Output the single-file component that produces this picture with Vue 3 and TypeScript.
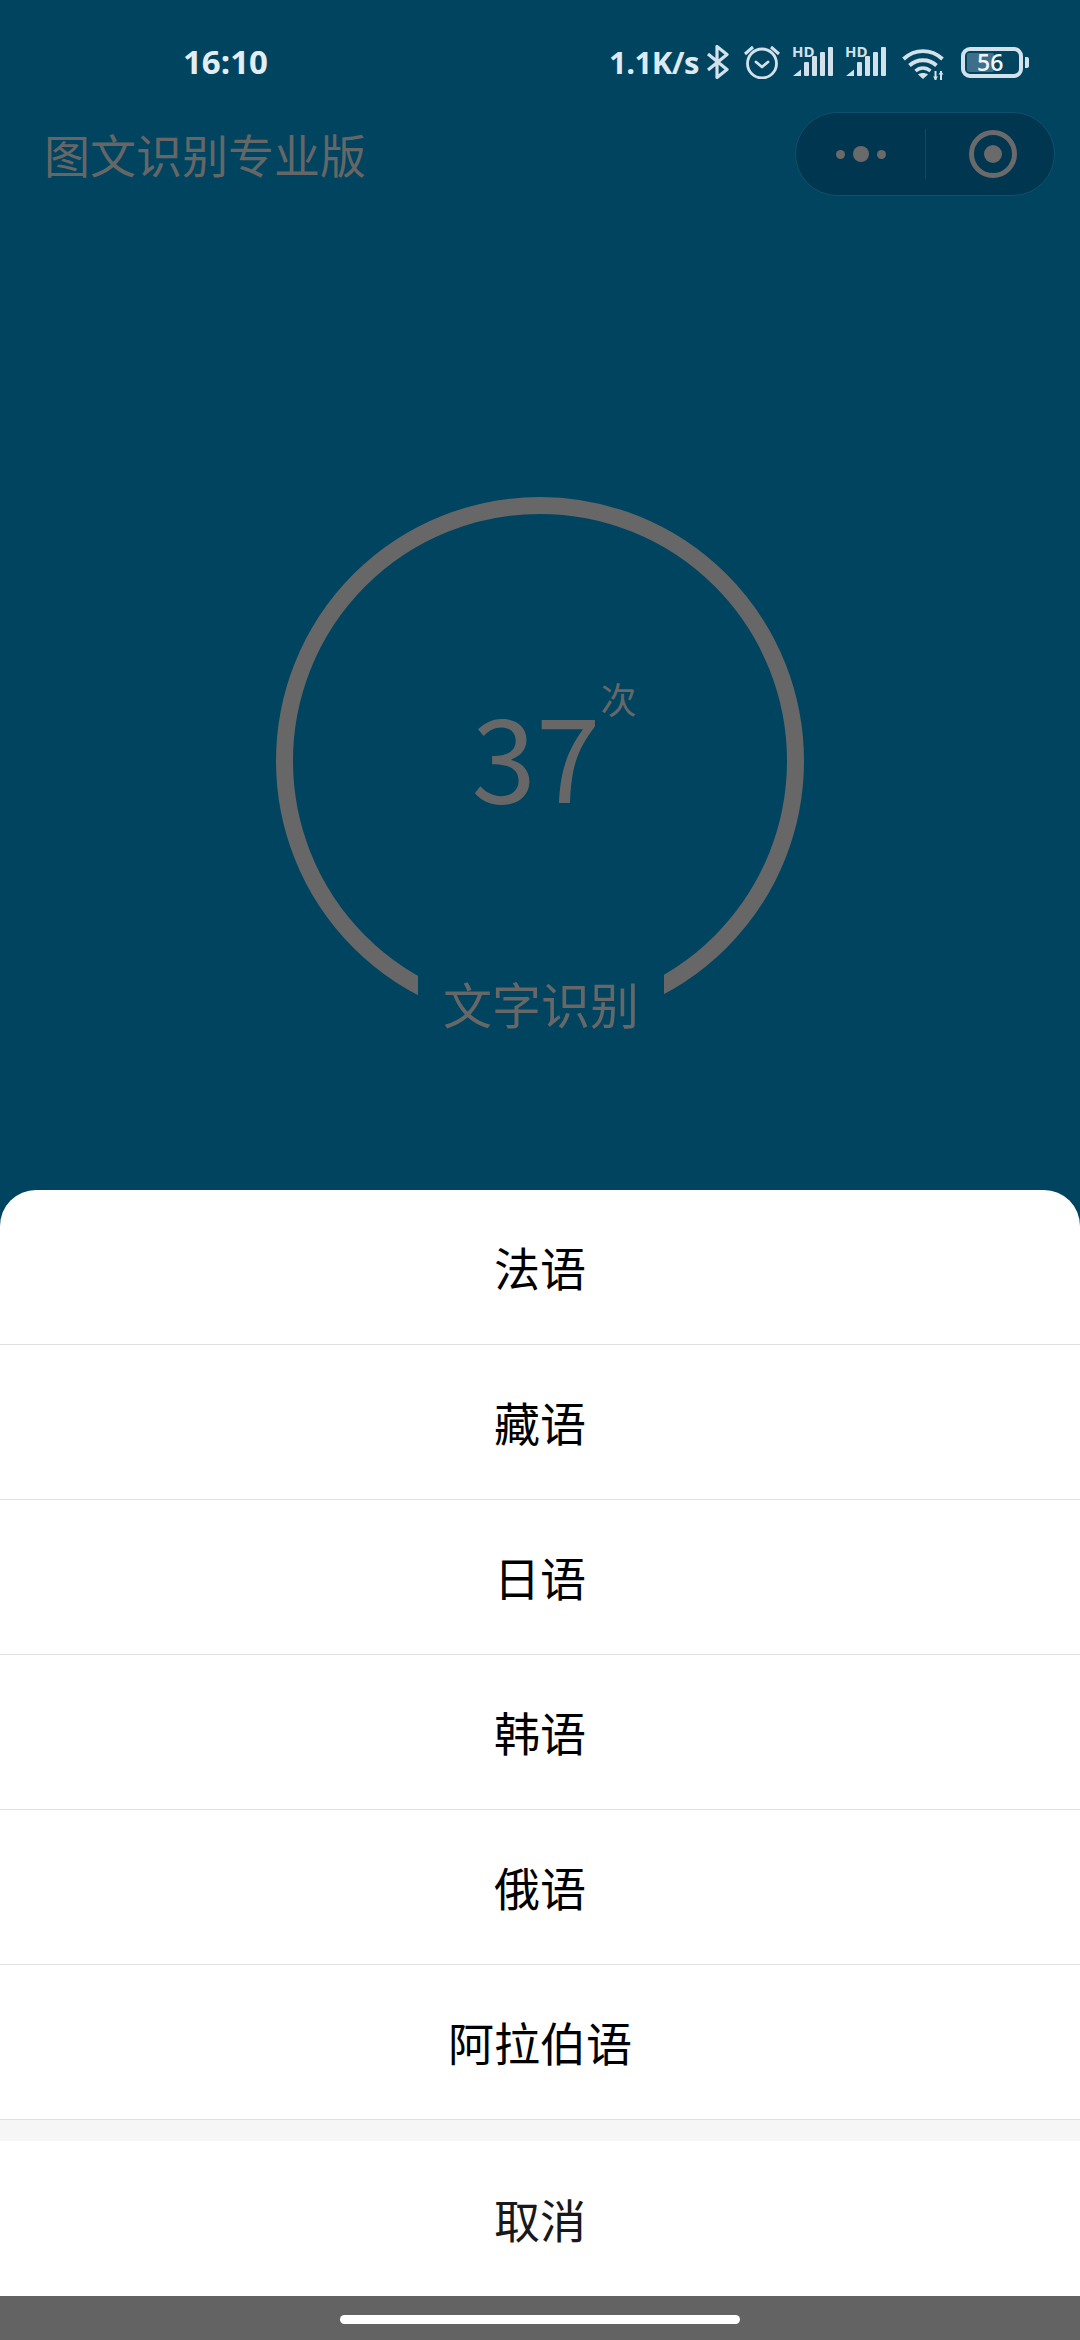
<script setup lang="ts">
const languages: string[] = ["法语", "藏语", "日语", "韩语", "俄语", "阿拉伯语"];
const signalCards: number[] = [1, 2];
</script>

<template>
  <div class="page">
    <div class="status-bar">
      <span class="time">16:10</span>
      <div class="status-right">
        <span class="speed">1.1K/s</span>
        <svg class="ic-bt" width="22" height="34" viewBox="0 0 22 34" fill="none" stroke="#d3e2ea" stroke-width="3.200">
          <path d="M1 9 20 24.500 10 32.500V1.500L20 9.500 1 25" stroke-linejoin="round" />
        </svg>
        <svg class="ic-alarm" width="36" height="34" viewBox="0 0 36 34" fill="none" stroke="#d3e2ea" stroke-width="2.800">
          <circle cx="18" cy="18.500" r="14.500" />
          <path d="M12 17 18 22l6-5" stroke-linecap="round" stroke-linejoin="round" />
          <path d="M1 9 9 2M35 9 27 2" stroke-width="3" />
        </svg>
        <div v-for="card in signalCards" :key="card" class="signal">
          <span class="hd">HD</span>
          <svg width="40" height="29" viewBox="0 0 40 29" fill="#d3e2ea">
            <path d="M0 29 8 22.500V29Z" />
            <rect x="11" y="15" width="5" height="14" rx="1" />
            <rect x="19" y="9" width="5" height="20" rx="1" />
            <rect x="27" y="5" width="5" height="24" rx="1" />
            <rect x="35" y="0" width="5" height="29" rx="1" />
          </svg>
        </div>
        <svg class="ic-wifi" width="44" height="34" viewBox="0 0 44 34" fill="none" stroke="#d3e2ea" stroke-width="3.800">
          <path d="M1.500 12C13 1.500 29 1.500 40.500 12" />
          <path d="M7.500 18.500C15 11.500 27 11.500 34.500 18.500" />
          <path d="M13.500 24C18 20 24 20 28.500 24" stroke-width="3.400" />
          <path d="M16 27.500C18.500 25.500 23.500 25.500 26 27.500L21 32Z" fill="#d3e2ea" stroke="none" />
          <path d="M33.500 24v9M39 24v9" stroke-width="2" />
          <path d="M31 29.500h5L33.500 33ZM36.500 27.500h5L39 24Z" fill="#d3e2ea" stroke="none" />
        </svg>
        <div class="battery">
          <div class="battery-body">
            <div class="battery-fill"></div>
            <span class="battery-num">56</span>
          </div>
          <div class="battery-nub"></div>
        </div>
      </div>
    </div>

    <div class="nav-bar">
      <span class="nav-title">图文识别专业版</span>
      <div class="capsule">
        <div class="capsule-left">
          <i class="dot"></i>
          <i class="dot dot-big"></i>
          <i class="dot"></i>
        </div>
        <div class="capsule-line"></div>
        <div class="capsule-right">
          <div class="target"><i></i></div>
        </div>
      </div>
    </div>

    <div class="ring">
      <svg class="ring-svg" width="528" height="528" viewBox="0 0 528 528" fill="none">
        <circle cx="264" cy="264" r="255.500" stroke="#676767" stroke-width="17" />
      </svg>
      <div class="count">
        37<span class="count-unit">次</span>
      </div>
      <div class="ring-label">文字识别</div>
    </div>

    <div class="sheet">
      <div v-for="lang in languages" :key="lang" class="sheet-item">{{ lang }}</div>
      <div class="sheet-gap"></div>
      <div class="sheet-cancel">取消</div>
    </div>

    <div class="home-area">
      <div class="home-bar"></div>
    </div>
  </div>
</template>

<style scoped>
.page {
  width: 1080px;
  height: 2340px;
  display: flex;
  flex-direction: column;
  background-color: #004460;
  font-family: "Noto Sans CJK SC", "Noto Sans", sans-serif;
  overflow: hidden;
}

.status-bar {
  height: 112px;
  display: flex;
  align-items: flex-start;
  padding: 45px 0 0 183px;
  box-sizing: border-box;
  color: #e3eef4;
}
.time {
  font-family: "Open Sans", sans-serif;
  font-size: 33px;
  line-height: 34px;
  font-weight: 700;
}
.status-right {
  margin-left: auto;
  display: flex;
  align-items: flex-start;
}
.speed {
  font-family: "Open Sans", sans-serif;
  font-size: 31px;
  line-height: 34px;
  font-weight: 700;
  letter-spacing: -0.5px;
  color: #dfeaf0;
}
.ic-bt {
  margin-left: 8px;
}
.ic-alarm {
  margin-left: 15px;
}
.signal {
  position: relative;
  width: 40px;
  height: 34px;
  margin-left: 13px;
  padding-top: 2px;
}
.hd {
  position: absolute;
  left: -1px;
  top: -1px;
  font-family: "Open Sans", sans-serif;
  font-size: 15px;
  line-height: 15px;
  font-weight: 700;
  color: #d3e2ea;
}
.ic-wifi {
  margin-left: 16px;
  margin-top: 2px;
}
.battery {
  display: flex;
  align-items: center;
  height: 34px;
  margin-left: 15px;
  margin-right: 51px;
}
.battery-body {
  position: relative;
  width: 62px;
  height: 31px;
  border: 4px solid #d3e2ea;
  border-radius: 9px;
  box-sizing: border-box;
}
.battery-fill {
  position: absolute;
  left: 2px;
  top: 2px;
  bottom: 2px;
  width: 27px;
  border-radius: 2px;
  background-color: #3d6e8a;
}
.battery-num {
  position: absolute;
  left: 12px;
  top: -2px;
  font-family: "Open Sans", sans-serif;
  font-size: 23px;
  line-height: 27px;
  font-weight: 600;
  color: #f0f5f8;
}
.battery-nub {
  width: 4px;
  height: 11px;
  margin-left: 2px;
  border-radius: 0 2px 2px 0;
  background-color: #d3e2ea;
}

.nav-bar {
  height: 84px;
  display: flex;
  align-items: center;
  justify-content: space-between;
  padding: 0 25px 0 44px;
}
.nav-title {
  font-size: 46px;
  margin-top: -2px;
  color: #666;
}
.capsule {
  width: 260px;
  height: 84px;
  display: flex;
  align-items: center;
  box-sizing: border-box;
  border: 1px solid #11506b;
  border-radius: 42px;
  background-color: #00364f;
}
.capsule-left,
.capsule-right {
  display: flex;
  align-items: center;
  justify-content: center;
}
.capsule-left {
  width: 129px;
  gap: 8px;
}
.capsule-right {
  flex: 1;
  padding-left: 6px;
}
.dot {
  width: 9px;
  height: 9px;
  border-radius: 50%;
  background-color: #6a6a6a;
}
.dot-big {
  width: 16px;
  height: 16px;
}
.capsule-line {
  width: 1px;
  height: 50px;
  background-color: #0f4c66;
}
.target {
  width: 48px;
  height: 48px;
  display: flex;
  align-items: center;
  justify-content: center;
  border: 5px solid #6a6a6a;
  border-radius: 50%;
  box-sizing: border-box;
}
.target i {
  width: 18px;
  height: 18px;
  border-radius: 50%;
  background-color: #6a6a6a;
}

.ring {
  position: relative;
  width: 528px;
  height: 528px;
  margin: 301px auto 0;
  display: flex;
  align-items: center;
  justify-content: center;
}
.ring-svg {
  position: absolute;
  left: 0;
  top: 0;
}
.count {
  position: relative;
  margin-left: -8px;
  margin-top: -18px;
  font-size: 116px;
  font-weight: 400;
  line-height: 128px;
  color: #676767;
}
.count-unit {
  position: absolute;
  left: 100%;
  top: -10px;
  margin-left: 0;
  font-size: 36px;
  line-height: 40px;
}
.ring-label {
  position: absolute;
  left: 142px;
  top: 461px;
  width: 246px;
  height: 90px;
  line-height: 90px;
  text-align: center;
  font-size: 49px;
  color: #676767;
  background-color: #004460;
}

.sheet {
  margin-top: auto;
  border-radius: 36px 36px 0 0;
  background-color: #fff;
  overflow: hidden;
}
.sheet-item,
.sheet-cancel {
  height: 155px;
  box-sizing: border-box;
  display: flex;
  align-items: center;
  justify-content: center;
  padding-bottom: 2px;
  font-size: 46px;
  color: #000;
}
.sheet-item {
  border-bottom: 1px solid #e0e0e0;
}
.sheet-cancel {
  color: #191919;
}
.sheet-gap {
  height: 21px;
  background-color: #f6f6f6;
}
.home-area {
  height: 44px;
  display: flex;
  justify-content: center;
  padding-top: 19px;
  box-sizing: border-box;
  background-color: #636363;
}
.home-bar {
  width: 400px;
  height: 9px;
  border-radius: 5px;
  background-color: #fff;
}
</style>
